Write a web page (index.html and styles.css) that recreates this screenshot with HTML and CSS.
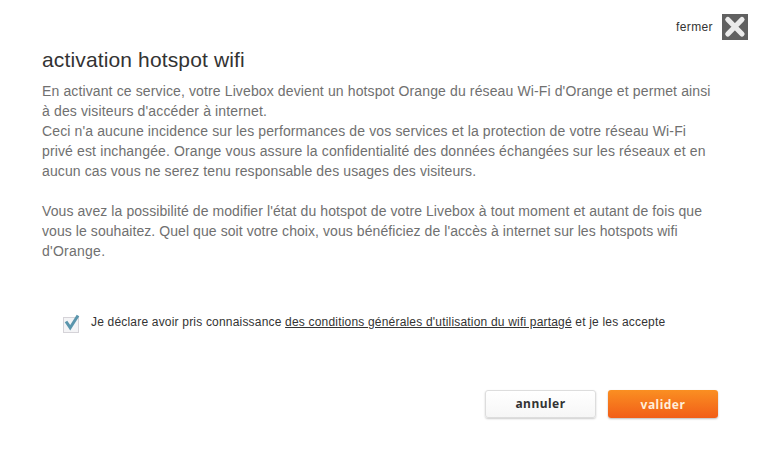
FILE: index.html
```html
<!DOCTYPE html>
<html lang="fr">
<head>
<meta charset="utf-8">
<title>activation hotspot wifi</title>
<link rel="stylesheet" href="styles.css">
</head>
<body>
<main class="dialog">
  <header class="top">
    <span class="close-label">fermer</span>
    <button class="close" aria-label="fermer">
      <svg width="26" height="26" viewBox="0 0 26 26"><path d="M5.8 5.5L20 20M20 5.5L5.8 20"/></svg>
    </button>
  </header>
  <h1>activation hotspot wifi</h1>
  <div class="copy">
    <p><span class="l1">En activant ce service, votre Livebox devient un hotspot Orange du réseau Wi-Fi d'Orange et permet ainsi</span>
    <span class="l2">à des visiteurs d'accéder à internet.</span>
    <span class="l3">Ceci n'a aucune incidence sur les performances de vos services et la protection de votre réseau Wi-Fi</span>
    <span class="l4">privé est inchangée. Orange vous assure la confidentialité des données échangées sur les réseaux et en</span>
    <span class="l5">aucun cas vous ne serez tenu responsable des usages des visiteurs.</span></p>
    <p><span class="l6">Vous avez la possibilité de modifier l'état du hotspot de votre Livebox à tout moment et autant de fois que</span>
    <span class="l7">vous le souhaitez. Quel que soit votre choix, vous bénéficiez de l'accès à internet sur les hotspots wifi</span>
    <span class="l8">d'Orange.</span></p>
  </div>
  <div class="consent">
    <svg class="check" width="18" height="20" viewBox="0 0 18 20"><rect x="1.5" y="3.5" width="15" height="15"/><path d="M4 7.5L8.2 13.7L16 1.5"/></svg>
    <span class="terms">Je déclare avoir pris connaissance <a>des conditions générales d'utilisation du wifi partagé</a> et je les accepte</span>
  </div>
  <footer class="actions">
    <button class="btn cancel">annuler</button>
    <button class="btn submit">valider</button>
  </footer>
</main>
</body>
</html>
```
FILE: styles.css
```css
* { box-sizing: border-box; }
body { margin: 0; background: #fff; font-family: "Liberation Sans", Arial, sans-serif; color: #333; }
.dialog { height: 451px; padding: 14px 11px 0 42px; overflow: hidden; }
button { margin: 0; padding: 0; font: inherit; }
.top { display: flex; justify-content: flex-end; align-items: center; gap: 9px; height: 26px; }
.close-label { font-size: 12px; letter-spacing: .4px; }
.close { width: 26px; height: 26px; border: 0; background: #606060; }
.close svg { display: block; }
.close path { stroke: #ebebeb; stroke-width: 5.2; stroke-linecap: round; fill: none; }
h1 { margin: 8px 0 9px; font-size: 21px; line-height: 24px; font-weight: 400; letter-spacing: .14px; white-space: nowrap; }
.copy { font-size: 14px; line-height: 20px; color: #707070; white-space: nowrap; }
.copy p { margin: 0 0 20px; }
.copy span { display: block; width: max-content; letter-spacing: .125px; }
.copy .l2 { letter-spacing: .14px; }
.copy .l4 { letter-spacing: .135px; }
.copy .l5 { letter-spacing: .105px; }
.copy .l6 { letter-spacing: .085px; }
.copy .l7 { letter-spacing: .07px; }
.copy .l8 { letter-spacing: .25px; }
.consent { display: flex; align-items: center; gap: 11px; margin: 51px 0 0 20px; height: 20px; font-size: 12px; white-space: nowrap; }
.check { margin-top: 3px; }
.check rect { fill: #f4f4f6; stroke: #d5d3d8; }
.check path { fill: none; stroke: #5a95ac; stroke-width: 3; }
.terms { letter-spacing: .19px; }
.terms a { text-decoration: underline; }
.actions { display: flex; justify-content: flex-end; gap: 12px; margin: 58px 30px 0 0; }
.btn { height: 28px; font: bold 12px/26px "Noto Sans", Tahoma, sans-serif; letter-spacing: .5px; border-radius: 3px; }
.cancel { width: 111px; color: #333; border: 1px solid #ddd; background: linear-gradient(#fff, #f6f6f6); box-shadow: 0 1px 2px #ccc; }
.submit { width: 110px; padding-top: 2px; color: #ffeed8; border: 0; background: linear-gradient(#fa8f22, #f25e18); box-shadow: 0 1px 2px #bbb; }
```
